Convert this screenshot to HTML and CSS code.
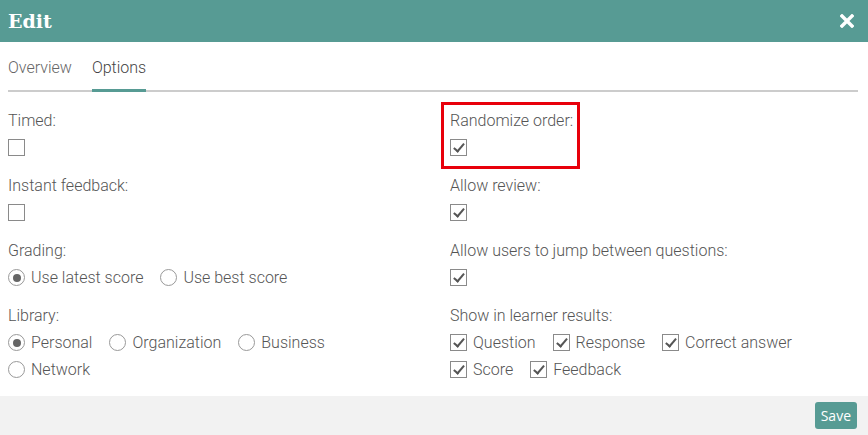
FILE: index.html
```html
<!DOCTYPE html>
<html lang="en">
<head>
    <meta charset="UTF-8">
    <title>Edit</title>
    <link rel="stylesheet" href="styles.css">
</head>
<body>
    <div class="modal">
        <header class="modal_head">
            <h1>Edit</h1>
            <span class="close">
                <svg width="14" height="14" viewBox="0 0 14 14">
                    <path d="M2 2 L12 12 M12 2 L2 12" stroke="#fff" stroke-width="3.4" stroke-linecap="square"/>
                </svg>
            </span>
        </header>

        <nav class="tabs">
            <a class="tab">Overview</a>
            <a class="tab tab_active">Options</a>
        </nav>

        <main class="options">
            <div class="col">
                <div class="group">
                    <div class="label">Timed:</div>
                    <div class="row"><span class="box"></span></div>
                </div>
                <div class="group">
                    <div class="label">Instant feedback:</div>
                    <div class="row"><span class="box"></span></div>
                </div>
                <div class="group">
                    <div class="label">Grading:</div>
                    <div class="row">
                        <label class="item"><span class="radio radio_on"></span>Use latest score</label>
                        <label class="item"><span class="radio"></span>Use best score</label>
                    </div>
                </div>
                <div class="group">
                    <div class="label">Library:</div>
                    <div class="row">
                        <label class="item"><span class="radio radio_on"></span>Personal</label>
                        <label class="item"><span class="radio"></span>Organization</label>
                        <label class="item"><span class="radio"></span>Business</label>
                    </div>
                    <div class="row">
                        <label class="item"><span class="radio"></span>Network</label>
                    </div>
                </div>
            </div>

            <div class="col">
                <div class="group marked">
                    <div class="label">Randomize order:</div>
                    <div class="row"><span class="box box_on"></span></div>
                </div>
                <div class="group">
                    <div class="label">Allow review:</div>
                    <div class="row"><span class="box box_on"></span></div>
                </div>
                <div class="group">
                    <div class="label">Allow users to jump between questions:</div>
                    <div class="row"><span class="box box_on"></span></div>
                </div>
                <div class="group">
                    <div class="label">Show in learner results:</div>
                    <div class="row">
                        <label class="item"><span class="box box_on"></span>Question</label>
                        <label class="item"><span class="box box_on"></span>Response</label>
                        <label class="item"><span class="box box_on"></span>Correct answer</label>
                    </div>
                    <div class="row">
                        <label class="item"><span class="box box_on"></span>Score</label>
                        <label class="item"><span class="box box_on"></span>Feedback</label>
                    </div>
                </div>
            </div>
        </main>

        <footer class="modal_foot">
            <button class="save">Save</button>
        </footer>
    </div>
</body>
</html>
```

FILE: styles.css
```css
body {
    margin: 0;
    font-family: Roboto, "Liberation Sans", sans-serif;
    color: #555;
    background: #fff;
}

.modal {
    width: 868px;
    height: 435px;
    display: flex;
    flex-direction: column;
}

.modal_head {
    height: 42px;
    background-color: #579b94;
    display: flex;
    align-items: center;
    justify-content: space-between;
    padding: 0 14px 0 8px;
}

.modal_head h1 {
    margin: 0;
    font-family: "DejaVu Serif", serif;
    font-weight: bold;
    font-size: 19px;
    color: white;
}

.close {
    display: flex;
}

.tabs {
    display: flex;
    gap: 20px;
    margin: 0 10px 0 8px;
    border-bottom: 2px solid #ccc;
    height: 48px;
}

.tab {
    font-size: 16px;
    font-weight: 300;
    color: #666;
    padding-top: 16px;
    line-height: 20px;
}

.tab_active {
    color: #444;
    border-bottom: 3px solid #579b94;
    margin-bottom: -2px;
}

.options {
    flex: 1;
    display: grid;
    grid-template-columns: 442px 1fr;
    padding: 16px 8px 0 8px;
}

.group {
    margin-bottom: 12px;
    position: relative;
}

.label {
    font-size: 16px;
    font-weight: 300;
    line-height: 26px;
}

.row {
    display: flex;
    align-items: center;
    height: 27px;
}

.item {
    display: inline-flex;
    align-items: center;
    gap: 6px;
    margin-right: 17px;
    font-size: 16px;
    font-weight: 300;
}

.box {
    width: 15px;
    height: 15px;
    border: 1px solid #8a8a8a;
    background: #fff;
    position: relative;
}

.box_on::after {
    content: "";
    position: absolute;
    left: 5px;
    top: 1px;
    width: 4px;
    height: 9px;
    border-right: 2px solid #555;
    border-bottom: 2px solid #555;
    transform: rotate(40deg);
}

.radio {
    width: 15px;
    height: 15px;
    border: 1px solid #999;
    border-radius: 50%;
    background: #fff;
    position: relative;
}

.radio_on::after {
    content: "";
    position: absolute;
    left: 3.5px;
    top: 3.5px;
    width: 8px;
    height: 8px;
    border-radius: 50%;
    background: #666;
}

.marked::before {
    content: "";
    position: absolute;
    left: -9px;
    top: -6px;
    width: 133px;
    height: 61px;
    border: 3px solid #e8000b;
}

.modal_foot {
    height: 39px;
    background-color: #f2f2f2;
    display: flex;
    align-items: center;
    justify-content: flex-end;
    padding-right: 11px;
}

.save {
    background-color: #579b94;
    color: white;
    border: none;
    border-radius: 3px;
    font-family: "Open Sans", sans-serif;
    font-size: 14px;
    height: 27px;
    padding: 0 6px;
}
```
